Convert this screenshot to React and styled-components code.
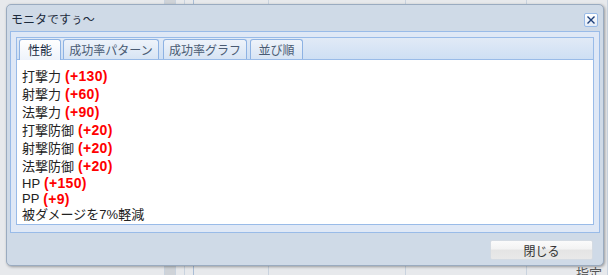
import React from 'react';
import styled, { createGlobalStyle } from 'styled-components';

const GlobalStyle = createGlobalStyle`
  html, body {
    margin: 0;
    padding: 0;
    background: #e7e9ec;
    font-family: "Noto Sans CJK JP", "Noto Sans", sans-serif;
  }
`;

const Desktop = styled.div`
  position: relative;
  width: 608px;
  height: 275px;
  overflow: hidden;
  background: #e7e9ec;
`;

const BackdropRow = styled.div`
  display: flex;
  height: 100%;
`;

const BackdropCol = styled.div`
  width: ${(p) => p.$w}px;
  border-right: 1px solid ${(p) => p.$line || '#c9d3df'};
  background: ${(p) => p.$bg || 'transparent'};
`;

const BackText = styled.div`
  position: absolute;
  left: 576px;
  top: 266px;
  font-size: 13px;
  line-height: 14px;
  color: #555;
`;

const Dialog = styled.div`
  position: absolute;
  left: 6px;
  top: 4px;
  width: 598px;
  height: 262px;
  box-sizing: border-box;
  border: 1px solid #9aabc0;
  border-radius: 5px;
  background: #cfdae7;
  box-shadow: 1px 1px 3px rgba(0, 0, 0, 0.35);
  padding: 0 3px;
  display: flex;
  flex-direction: column;
`;

const TitleBar = styled.div`
  height: 26px;
  display: flex;
  align-items: center;
  justify-content: space-between;
  padding: 0 2px 0 1px;
`;

const Title = styled.span`
  font-size: 12px;
  color: #1c2a3c;
`;

const CloseButton = styled.div`
  width: 14px;
  height: 14px;
  box-sizing: border-box;
  border: 1px solid #99bbe8;
  border-radius: 2px;
  background: linear-gradient(#ffffff, #e3ebf6);
  display: flex;
  align-items: center;
  justify-content: center;
  margin-top: 3px;
`;

const Panel = styled.div`
  height: 202px;
  box-sizing: border-box;
  border: 1px solid #99bbe8;
  background: #dfe8f6;
  padding: 5px;
  display: flex;
  flex-direction: column;
`;

const TabStrip = styled.div`
  height: 23px;
  box-sizing: border-box;
  border: 1px solid #99bbe8;
  background: linear-gradient(#e1eaf6, #cedff4);
  display: flex;
  align-items: flex-end;
  padding-left: 2px;
`;

const Tab = styled.div`
  width: ${(p) => p.$w}px;
  height: ${(p) => (p.$active ? 21 : 20)}px;
  box-sizing: border-box;
  border: 1px solid #8db2e3;
  border-bottom: none;
  border-radius: 3px 3px 0 0;
  margin-right: ${(p) => p.$mr || 0}px;
  background: ${(p) =>
    p.$active
      ? 'linear-gradient(#ffffff, #eef3fb)'
      : 'linear-gradient(#eef3fa, #d7e4f4)'};
  margin-bottom: ${(p) => (p.$active ? -1 : 0)}px;
  font-size: 12px;
  line-height: 19px;
  text-align: center;
  color: ${(p) => (p.$active ? '#15283f' : '#4a5b73')};
`;

const Content = styled.div`
  height: 165px;
  box-sizing: border-box;
  border: 1px solid #99bbe8;
  border-top: none;
  background: #ffffff;
  padding: 7px 5px 0;
  font-family: "Liberation Sans", "Noto Sans CJK JP", sans-serif;
`;

const StatRow = styled.div`
  height: ${(p) => p.$h}px;
  display: flex;
  align-items: center;
  font-size: 13px;
  line-height: 13px;
  color: #222;
  white-space: pre;
`;

const Bonus = styled.span`
  color: #ff0000;
  font-weight: bold;
  font-size: 14px;
  line-height: 14px;
  margin-left: 4px;
  letter-spacing: 0.3px;
`;

const Footer = styled.div`
  display: flex;
  justify-content: flex-end;
  padding: 7px 7px 0 0;
`;

const Button = styled.div`
  width: 103px;
  height: 20px;
  box-sizing: border-box;
  border: 1px solid #d4dbe3;
  border-radius: 2px;
  background: linear-gradient(#fbfbfb 0%, #f3f3f3 45%, #e4e4e4 50%, #e9e9e9 100%);
  font-size: 12px;
  line-height: 19px;
  text-align: center;
  color: #333;
`;

const stats = [
  { label: '打撃力', bonus: '(+130)', h: 18 },
  { label: '射撃力', bonus: '(+60)', h: 18 },
  { label: '法撃力', bonus: '(+90)', h: 18 },
  { label: '打撃防御', bonus: '(+20)', h: 18 },
  { label: '射撃防御', bonus: '(+20)', h: 18 },
  { label: '法撃防御', bonus: '(+20)', h: 18 },
  { label: 'HP', bonus: '(+150)', h: 16 },
  { label: 'PP', bonus: '(+9)', h: 15 },
  { label: '被ダメージを7%軽減', h: 16 },
];

const tabs = [
  { name: '性能', w: 42, mr: 2, active: true },
  { name: '成功率パターン', w: 96, mr: 4 },
  { name: '成功率グラフ', w: 84, mr: 3 },
  { name: '並び順', w: 53 },
];

const backCols = [
  { w: 164 }, { w: 10, bg: '#cfd3d8' }, { w: 8 }, { w: 8, line: '#a9bdd6' },
  { w: 74 }, { w: 136 }, { w: 120 }, { w: 80 },
];

function App() {
  return (
    <Desktop>
      <GlobalStyle />
      <BackdropRow>
        {backCols.map((c, i) => (
          <BackdropCol key={i} $w={c.w} $bg={c.bg} $line={c.line} />
        ))}
      </BackdropRow>
      <BackText>指定が</BackText>
      <Dialog>
        <TitleBar>
          <Title>モニタですぅ～</Title>
          <CloseButton>
            <svg width="10" height="10" viewBox="0 0 10 10">
              <path d="M1.5 1.5 L8.5 8.5 M8.5 1.5 L1.5 8.5" stroke="#1d3f7a" strokeWidth="1.4" />
            </svg>
          </CloseButton>
        </TitleBar>
        <Panel>
          <TabStrip>
            {tabs.map((t) => (
              <Tab key={t.name} $w={t.w} $mr={t.mr} $active={t.active}>
                {t.name}
              </Tab>
            ))}
          </TabStrip>
          <Content>
            {stats.map((s) => (
              <StatRow key={s.label} $h={s.h}>
                {s.label}
                {s.bonus && <Bonus>{s.bonus}</Bonus>}
              </StatRow>
            ))}
          </Content>
        </Panel>
        <Footer>
          <Button>閉じる</Button>
        </Footer>
      </Dialog>
    </Desktop>
  );
}

export default App;
